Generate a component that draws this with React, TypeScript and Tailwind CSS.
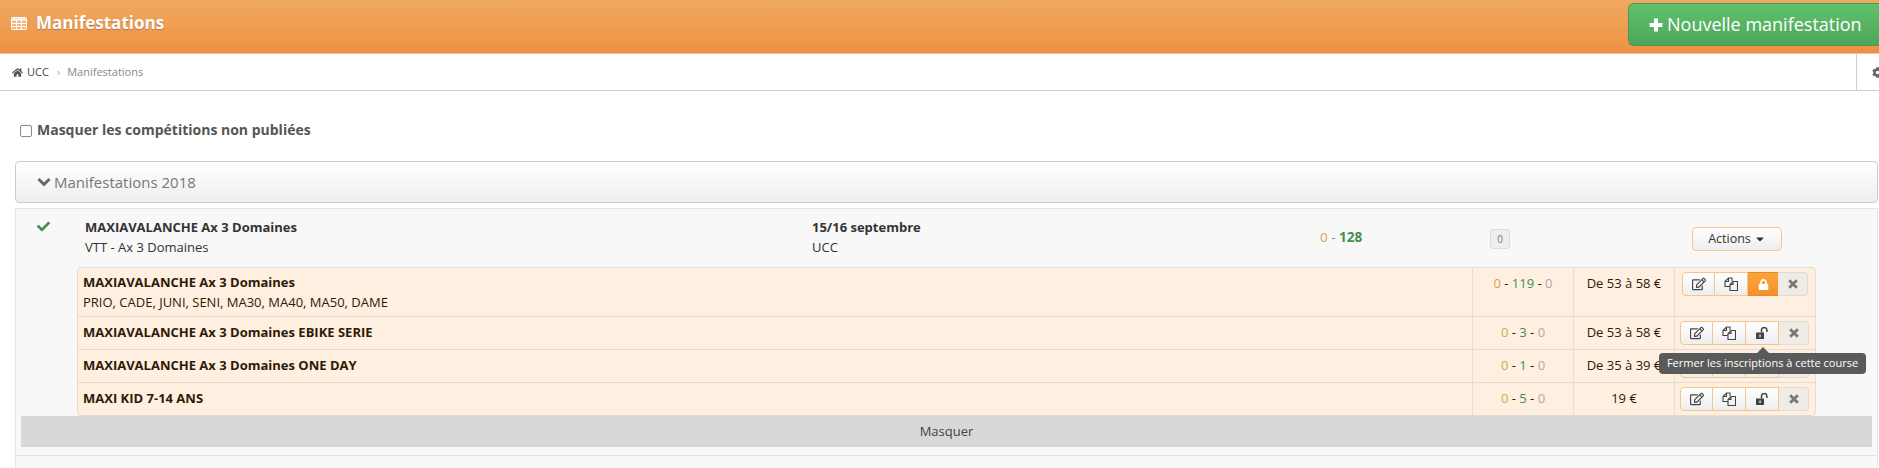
import { FaCaretDown, FaCheck, FaCog, FaHome, FaLock, FaRegEdit } from "react-icons/fa";

const races = [
    { name: "MAXIAVALANCHE Ax 3 Domaines", cats: "PRIO, CADE, JUNI, SENI, MA30, MA40, MA50, DAME", count: "119", price: "De 53 à 58 €" },
    { name: "MAXIAVALANCHE Ax 3 Domaines EBIKE SERIE", count: "3", price: "De 53 à 58 €" },
    { name: "MAXIAVALANCHE Ax 3 Domaines ONE DAY", count: "1", price: "De 35 à 39 €" },
    { name: "MAXI KID 7-14 ANS", count: "5", price: "19 €" },
];

function TableIcon() {
    return (
        <svg width="16" height="13" viewBox="0 0 16 13" fill="none" stroke="currentColor" strokeWidth="1">
            <rect x="0.5" y="0.5" width="15" height="12" rx="1" fill="currentColor" fillOpacity="0.25" />
            <path d="M0.5 2.5h15" strokeWidth="2" />
            <path d="M0.5 6.5h15M0.5 9.5h15M5.5 3v9.5M10.5 3v9.5" />
        </svg>
    );
}

function PlusIcon() {
    return (
        <svg width="14" height="14" viewBox="0 0 14 14" fill="currentColor">
            <path d="M5 0.5h4v4.5h4.5v4H9v4.5H5V9H0.5V5H5z" />
        </svg>
    );
}

function ChevronIcon() {
    return (
        <svg width="14" height="10" viewBox="0 0 14 10" fill="none" stroke="currentColor" strokeWidth="3">
            <path d="M1.5 2l5.5 5.5L12.5 2" />
        </svg>
    );
}

function FilesIcon() {
    return (
        <svg width="14" height="14" viewBox="0 0 14 14" fill="none" stroke="currentColor" strokeWidth="1.1">
            <path d="M6 9.5H1V4.5L4.5 1H8V4" />
            <path d="M4.5 1v3.5H1" />
            <path d="M6 13.5V7.5L9 4.5h4.5v9z" />
            <path d="M9 4.5v3H6" />
        </svg>
    );
}

function OpenLockIcon() {
    return (
        <svg width="13" height="12" viewBox="0 0 13 12" fill="currentColor">
            <path d="M0 5.5h8V12H0z" />
            <path d="M5.5 5.5V3.2a2.7 2.7 0 0 1 5.4 0V5" fill="none" stroke="currentColor" strokeWidth="1.5" />
            <rect x="3.4" y="7.5" width="1.3" height="2.6" fill="#f2f2f2" />
        </svg>
    );
}

function CrossIcon() {
    return (
        <svg width="10" height="10" viewBox="0 0 10 10" fill="none" stroke="currentColor" strokeWidth="2.8">
            <path d="M1.2 1.2l7.6 7.6M8.8 1.2L1.2 8.8" />
        </svg>
    );
}

function RaceActions({ locked }: { locked: boolean }) {
    const btn = "h-[24px] flex items-center justify-center border-y border-r border-[#f2c78f] bg-gradient-to-b from-white to-[#eeeeee] text-[#444]";
    return (
        <div className={locked ? "flex ml-[7px] mt-[4px]" : "flex ml-[5px] mt-[4px]"}>
            <div className={`${btn} w-[33px] border-l rounded-l-[4px]`}>
                <FaRegEdit size={14} />
            </div>
            <div className={`${btn} w-[33px]`}>
                <FilesIcon />
            </div>
            {locked ? (
                <div className="h-[24px] w-[30px] flex items-center justify-center border-y border-[#e98a24] bg-gradient-to-b from-[#fba53c] to-[#f6902a] text-white">
                    <FaLock size={11} />
                </div>
            ) : (
                <div className={`${btn} w-[33px] text-[#222]`}>
                    <OpenLockIcon />
                </div>
            )}
            <div className="h-[24px] w-[30px] flex items-center justify-center border-y border-r border-[#e2dcd4] bg-[#f0ebe5] rounded-r-[4px] text-[#777]">
                <CrossIcon />
            </div>
        </div>
    );
}

export default function App() {
    return (
        <div className="w-[1879px] h-[468px] overflow-hidden bg-white text-[#333] [font-family:'Open_Sans',sans-serif]">
            {/* Title bar */}
            <header className="h-[54px] flex items-start justify-between bg-gradient-to-b from-[#eeaa60] to-[#ef9043] border-b border-[#f0c49a]">
                <div className="flex items-center h-[46px] pl-[11px] text-white">
                    <TableIcon />
                    <h1 className="ml-[9px] text-[17px] font-bold [text-shadow:0_1px_1px_rgba(0,0,0,0.25)]">Manifestations</h1>
                </div>
                <button className="mt-[3px] w-[251px] h-[43px] pl-[20px] flex items-center gap-[4px] rounded-l-[6px] border border-r-0 border-[#4a9a52] bg-gradient-to-b from-[#5fc26d] to-[#4fa559] text-white text-[18px]">
                    <PlusIcon />
                    Nouvelle manifestation
                </button>
            </header>

            {/* Breadcrumb */}
            <nav className="h-[37px] flex items-center justify-between border-b border-[#cfcfcf] text-[11px]">
                <div className="flex items-center pl-[12px]">
                    <FaHome size={11} className="text-[#555]" />
                    <span className="ml-[4px] text-[#444]">UCC</span>
                    <span className="ml-[8px] text-[#aaa]">›</span>
                    <span className="ml-[7px] text-[#888]">Manifestations</span>
                </div>
                <div className="w-[23px] h-full pl-[15px] flex items-center border-l border-[#cfcfcf] text-[#666] overflow-hidden">
                    <FaCog size={11} className="shrink-0" />
                </div>
            </nav>

            {/* Filter */}
            <label className="h-[70px] pl-[20px] pt-[7px] flex items-center gap-[5px] text-[14px] font-bold text-[#555]">
                <span className="w-[12px] h-[12px] mt-[2px] rounded-[2px] border border-[#8a8a8a] bg-white" />
                Masquer les compétitions non publiées
            </label>

            <div className="ml-[15px] mr-[1px]">
                {/* Year panel */}
                <div className="h-[42px] pl-[21px] flex items-center gap-[3px] rounded-[4px] border border-[#cccccc] bg-gradient-to-b from-white to-[#eeeeee] text-[15px] text-[#777]">
                    <span className="text-[#666]">
                        <ChevronIcon />
                    </span>
                    Manifestations 2018
                </div>

                {/* Event */}
                <section className="mt-[5px] h-[300px] border border-[#e6e6e6] bg-[#f8f8f8] text-[13px]">
                    <div className="h-[58px] grid grid-cols-[69px_727px_508px_170px_202px_1fr]">
                        <div className="pl-[21px] pt-[11px] text-[#3f8f50]">
                            <FaCheck size={13} />
                        </div>
                        <div className="pt-[8px] leading-[20px]">
                            <div className="font-bold">MAXIAVALANCHE Ax 3 Domaines</div>
                            <div>VTT - Ax 3 Domaines</div>
                        </div>
                        <div className="pt-[8px] leading-[20px]">
                            <div className="font-bold">15/16 septembre</div>
                            <div>UCC</div>
                        </div>
                        <div className="pt-[18px] leading-[20px] text-[13.5px]">
                            <span className="text-[#d4a64f]">0</span>
                            <span className="text-[#888]"> - </span>
                            <span className="font-bold text-[#3f8f50]">128</span>
                        </div>
                        <div className="pt-[20px]">
                            <span className="w-[20px] h-[20px] flex items-center justify-center rounded-[3px] border border-[#dddddd] bg-[#eeeeee] text-[10px] text-[#777]">0</span>
                        </div>
                        <div className="pt-[18px]">
                            <button className="w-[90px] h-[24px] flex items-center justify-center gap-[3px] rounded-[4px] border border-[#f2c78f] bg-gradient-to-b from-white to-[#eeeeee] text-[12.5px] text-[#333]">
                                Actions
                                <FaCaretDown size={12} />
                            </button>
                        </div>
                    </div>

                    {/* Races */}
                    <div className="ml-[61px] w-[1739px] rounded-[4px] border border-[#e5ddd3] bg-[#ffefe0] text-[#2e1a06]">
                        {races.map((race, i) => (
                            <div
                                key={race.name}
                                className={`grid grid-cols-[1394px_101px_101px_1fr] ${i === 0 ? "h-[48px]" : "h-[33px] border-t border-[#e5ddd3]"}`}
                            >
                                <div className={`pl-[5px] leading-[20px] text-[13px] ${i === 0 ? "pt-[4px]" : "pt-[5px]"}`}>
                                    <div className="font-bold">{race.name}</div>
                                    {race.cats && <div>{race.cats}</div>}
                                </div>
                                <div className="pt-[5px] leading-[20px] text-center border-l border-[#e5ddd3] text-[13px]">
                                    <span className="text-[#d4a64f]">0</span>
                                    <span> - </span>
                                    <span className="text-[#3f8f50]">{race.count}</span>
                                    <span> - </span>
                                    <span className="text-[#aaaaaa]">0</span>
                                </div>
                                <div className="pt-[5px] leading-[20px] text-center border-l border-[#e5ddd3]">{race.price}</div>
                                <div className="relative border-l border-[#e5ddd3]">
                                    <RaceActions locked={i === 0} />
                                    {i === 1 && (
                                        <div className="absolute z-10 left-[-16px] top-[36px] w-[207px] h-[21px] flex items-center justify-center rounded-[4px] bg-[#5a5a5a] text-white text-[11px] whitespace-nowrap">
                                            <span className="absolute top-[-6px] left-[98px] w-0 h-0 border-x-[6px] border-x-transparent border-b-[6px] border-b-[#5a5a5a]" />
                                            Fermer les inscriptions à cette course
                                        </div>
                                    )}
                                </div>
                            </div>
                        ))}
                    </div>

                    <div className="mx-[5px] h-[31px] pt-[1px] flex items-center justify-center bg-[#d8d8d8] text-[13px] text-[#444]">Masquer</div>
                    <div className="mt-[8px] border-t border-[#e3e3e3]" />
                </section>
            </div>
        </div>
    );
}
